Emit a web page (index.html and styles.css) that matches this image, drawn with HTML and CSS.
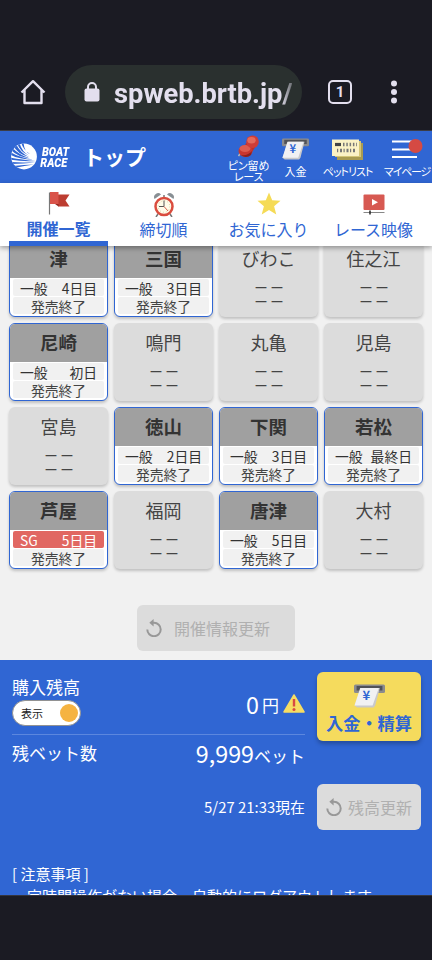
FILE: index.html
```html
<!DOCTYPE html>
<html lang="ja">
<head>
<meta charset="utf-8">
<meta name="viewport" content="width=device-width, initial-scale=1">
<title>トップ</title>
<link rel="stylesheet" href="styles.css">
</head>
<body>
<svg width="0" height="0" class="defs">
  <defs>
    <symbol id="cash" viewBox="0 0 30 24">
      <rect x="0" y="0.5" width="30" height="8.500" rx="1.5" fill="#8b8b8e"/>
      <rect x="2.5" y="2" width="25" height="4.500" fill="#505258"/>
      <path d="M7 4H25L20.5 21.500L19 23.500H3L0.500 21.500Z" fill="#c9c9cb"/>
      <path d="M6 4H24L18 21.500H0.500Z" fill="#f1f1f3"/>
      <text x="12" y="16.500" text-anchor="middle" font-family="Noto Sans CJK JP, sans-serif" font-size="12.5" font-weight="700" fill="#3066d3">¥</text>
    </symbol>
    <symbol id="reload" viewBox="0 0 16 18">
      <path d="M1.300 10.500A6.700 6.700 0 1 0 8 3.800H6.500" fill="none" stroke="#989898" stroke-width="2"/>
      <path d="M7.600 0V7.600L3.300 3.800Z" fill="#989898"/>
    </symbol>
  </defs>
</svg>
<div class="browser">
  <svg class="home" width="26" height="26" viewBox="0 0 26 26"><path d="M1.500 13.500L13 2.200L24.500 13.500M4.500 11V24H21.500V11" fill="none" stroke="#e3dfee" stroke-width="2.400" stroke-linejoin="round"/></svg>
  <div class="address">
    <svg width="16" height="20" viewBox="0 0 16 20"><path d="M4 8V5a4 4 0 0 1 8 0V8" fill="none" stroke="#e3dfee" stroke-width="2"/><rect x="0.500" y="6.500" width="15" height="13" rx="2" fill="#e3dfee"/></svg>
    <span class="url">spweb.brtb.jp/</span>
  </div>
  <span class="count">1</span>
  <svg class="dots" width="8" height="24" viewBox="0 0 8 24"><g fill="#e3dfee"><circle cx="4" cy="3.500" r="3"/><circle cx="4" cy="12" r="3"/><circle cx="4" cy="20.500" r="3"/></g></svg>
</div>
<header class="bar">
  <svg class="logo" width="26" height="27" viewBox="0 0 26 27">
    <defs><clipPath id="ball"><circle cx="13" cy="13.500" r="12.900"/></clipPath></defs>
    <g clip-path="url(#ball)">
      <rect width="26" height="27" fill="#fff"/>
      <g fill="#3066d3">
        <path d="M10 -1Q12 7 19 11Q13 9 12.500 -1Z"/>
        <path d="M6 0Q9 9 18 12.500Q11 9 8.500 0Z"/>
        <path d="M2 2Q6 11 18 14Q9 9.500 5 1Z"/>
        <path d="M-1 6Q6 14 19 15.500Q8 12 0.500 4Z"/>
        <path d="M-1 11.500Q7 16.500 22 16.700Q8 14.500 -1 9Z"/>
        <path d="M-1 16.500Q10 18.700 25 18Q10 16.700 -1 14.500Z"/>
        <path d="M0 21Q12 20.500 24.500 19.500Q11 19.500 0 19Z"/>
        <path d="M3 25Q14 22.500 23 21.500Q13 21.500 2 23Z"/>
      </g>
    </g>
  </svg>
  <div class="brand"><span>BOAT</span><span>RACE</span></div>
  <h1>トップ</h1>
  <nav class="tools">
    <a class="tool pin">
      <svg width="22" height="23" viewBox="0 0 22 23"><path d="M3 17L0.500 21" stroke="#bbb" stroke-width="1.500"/><path d="M7 9L13 6L18 11L14 17Z" fill="#bd302c"/><ellipse cx="7.500" cy="16" rx="7" ry="6" fill="#c93630"/><ellipse cx="7" cy="13.500" rx="5.500" ry="3.500" fill="#dd5c50"/><path d="M3 20Q8 24 13 20L14 16Q10 21 3 20Z" fill="#8d211f"/><circle cx="14.500" cy="6.800" r="6.300" fill="#cf3d37"/><ellipse cx="13.500" cy="5.300" rx="4.200" ry="3.200" fill="#e46a5c"/></svg>
      <span>ピン留め</span><span class="second">レース</span>
    </a>
    <a class="tool deposit"><svg width="27" height="22" viewBox="0 0 30 24" preserveAspectRatio="none"><use href="#cash"/></svg><span>入金</span></a>
    <a class="tool bets">
      <svg width="31" height="21" viewBox="0 0 31 21"><path d="M5 4H31V21H5Z" fill="#a89b51"/><path d="M3 2H29V18H3Z" fill="#d4c678"/><path d="M0 0.500H27V17H0Z" fill="#fbf2c5"/><path d="M3 5.500H9" stroke="#444" stroke-width="3.200"/><path d="M11 5.500H25" stroke="#777" stroke-width="3.500" stroke-dasharray="1.500 1.800"/><path d="M5 11.500H24" stroke="#777" stroke-width="3.500" stroke-dasharray="1.200 1.800 2 1.500"/></svg>
      <span>ペットリスト</span>
    </a>
    <a class="tool mypage">
      <svg width="32" height="21" viewBox="0 0 32 21"><path d="M1 2.500H27M1 10.500H27M1 18H26" stroke="#fff" stroke-width="1.900"/><circle cx="24.500" cy="7" r="7" fill="#d54a43"/></svg>
      <span>マイページ</span>
    </a>
  </nav>
</header>
<nav class="tabs">
  <a class="tab active"><svg width="22" height="24" viewBox="0 0 22 24"><path d="M1.500 2V24" stroke="#777" stroke-width="1.200"/><path d="M10 4H21.500L17.500 10L21.500 16H10Z" fill="#bd3d31"/><path d="M2 1.500H10.500V13.500H2Z" fill="#d9534a"/><path d="M7 13.500H10.500V16Z" fill="#8d2922"/></svg><span>開催一覧</span></a>
  <a class="tab"><svg width="22" height="25" viewBox="0 -1 22 25"><path d="M1.500 6A4 4 0 0 1 8 1.500ZM20.500 6A4 4 0 0 0 14 1.500Z" fill="#888f94"/><path d="M5 21L3 24M17 21L19 24M11 2V5" stroke="#777" stroke-width="1.500"/><circle cx="11" cy="13.500" r="8.500" fill="#fffbea" stroke="#da4c3e" stroke-width="2.500"/><circle cx="11" cy="13.500" r="5.800" fill="none" stroke="#e1cf9d" stroke-width="1" stroke-dasharray="1 2"/><path d="M11 7.500V13.500H6" fill="none" stroke="#555" stroke-width="1"/><path d="M11 13.500L15 18" stroke="#d9604d"/></svg><span>締切順</span></a>
  <a class="tab"><svg width="24" height="25" viewBox="0 0 24 25"><path d="M12 0.500L15.200 8.300L23.500 8.800L17.100 14.200L19.300 22.500L12 17.900L4.700 22.500L6.900 14.200L0.500 8.800L8.800 8.300Z" fill="#f5db56"/></svg><span>お気に入り</span></a>
  <a class="tab"><svg width="22" height="21" viewBox="0 0 22 21"><rect x="0.500" y="0.500" width="21" height="15.500" rx="1" fill="#d75952"/><path d="M9 5L15 8.200L9 11.500Z" fill="#fff"/><path d="M0.500 18.500H21.500" stroke="#888"/><path d="M7 16.500V20.500" stroke="#222" stroke-width="1.500"/></svg><span>レース映像</span></a>
</nav>
<main>
  <section class="grid">
    <article class="card open"><h2>津</h2><p class="day"><span>一般</span><span>4日目</span></p><p class="state">発売終了</p></article>
    <article class="card open"><h2>三国</h2><p class="day"><span>一般</span><span>3日目</span></p><p class="state">発売終了</p></article>
    <article class="card"><h2>びわこ</h2><p class="none">－－</p><p class="none">－－</p></article>
    <article class="card"><h2>住之江</h2><p class="none">－－</p><p class="none">－－</p></article>
    <article class="card open"><h2>尼崎</h2><p class="day"><span>一般</span><span>初日</span></p><p class="state">発売終了</p></article>
    <article class="card"><h2>鳴門</h2><p class="none">－－</p><p class="none">－－</p></article>
    <article class="card"><h2>丸亀</h2><p class="none">－－</p><p class="none">－－</p></article>
    <article class="card"><h2>児島</h2><p class="none">－－</p><p class="none">－－</p></article>
    <article class="card"><h2>宮島</h2><p class="none">－－</p><p class="none">－－</p></article>
    <article class="card open"><h2>徳山</h2><p class="day"><span>一般</span><span>2日目</span></p><p class="state">発売終了</p></article>
    <article class="card open"><h2>下関</h2><p class="day"><span>一般</span><span>3日目</span></p><p class="state">発売終了</p></article>
    <article class="card open"><h2>若松</h2><p class="day"><span>一般</span><span>最終日</span></p><p class="state">発売終了</p></article>
    <article class="card open"><h2>芦屋</h2><p class="day sg"><span>SG</span><span>5日目</span></p><p class="state">発売終了</p></article>
    <article class="card"><h2>福岡</h2><p class="none">－－</p><p class="none">－－</p></article>
    <article class="card open"><h2>唐津</h2><p class="day"><span>一般</span><span>5日目</span></p><p class="state">発売終了</p></article>
    <article class="card"><h2>大村</h2><p class="none">－－</p><p class="none">－－</p></article>
  </section>
  <button class="refresh"><svg width="16" height="18"><use href="#reload"/></svg><span>開催情報更新</span></button>
</main>
<footer>
  <div class="account">
    <div class="figures">
      <div class="balance">
        <div><div class="label">購入残高</div><div class="toggle"><span>表示</span><i></i></div></div>
        <div class="amount"><span class="num">0</span><span class="yen">円</span><svg width="22" height="19" viewBox="0 0 22 19"><path d="M11 1L21 18H1Z" fill="#f6dd63" stroke="#f6dd63" stroke-width="1.500" stroke-linejoin="round"/><path d="M11 5V12.500" stroke="#d94a42" stroke-width="2.400"/><circle cx="11" cy="15.500" r="1.500" fill="#d94a42"/></svg></div>
      </div>
      <div class="remaining"><span class="label">残ベット数</span><span><span class="num">9,999</span><span class="unit">ベット</span></span></div>
      <div class="asof">5/27 21:33現在</div>
    </div>
    <div class="actions">
      <button class="pay"><svg width="31" height="24" viewBox="0 0 30 24" preserveAspectRatio="none"><use href="#cash"/></svg><span>入金・精算</span></button>
      <button class="refresh small"><svg width="16" height="18"><use href="#reload"/></svg><span>残高更新</span></button>
    </div>
  </div>
  <div class="notes"><p>[ 注意事項 ]</p><p>一定時間操作がない場合、自動的にログアウトします。</p></div>
</footer>
</body>
</html>
```
FILE: styles.css
```css
* { box-sizing: border-box; margin: 0; padding: 0; }
html, body { height: 960px; overflow: hidden; }
body { width: 432px; background: #1b1b23; font-family: "Noto Sans CJK JP", sans-serif; display: flex; flex-direction: column; }
svg { display: block; flex: none; }
.defs { position: absolute; }
button { border: 0; font: inherit; }

.browser { height: 131px; flex: none; padding: 54px 0 0 20px; display: flex; align-items: center; border-bottom: 1px solid #3b3c46; }
.address { width: 237px; height: 54px; margin-left: 19px; border-radius: 27px; background: #2a302f; display: flex; align-items: center; padding: 0 10px 0 19px; }
.address svg { margin-top: -1px; }
.url { margin-left: 14px; flex: 1; overflow: hidden; white-space: nowrap; color: #e3dfee; font: 700 27.300px/40px Roboto, sans-serif; padding-top: 3px; -webkit-mask-image: linear-gradient(90deg, #000 94%, rgba(0,0,0,.35)); mask-image: linear-gradient(90deg, #000 94%, rgba(0,0,0,.35)); }
.count { width: 24px; height: 24px; margin-left: 26px; border: 2.500px solid #e3dfee; border-radius: 5px; color: #e3dfee; font: 700 15px/20px Roboto, sans-serif; text-align: center; }
.dots { margin-left: 38px; }

.bar { height: 52px; flex: none; background: #3066d3; color: #fff; display: flex; padding-left: 11px; }
.logo { margin-top: 12px; }
.brand { width: 31px; margin: 15px 0 0 5px; display: flex; flex-direction: column; font: italic 900 12.800px/11px Roboto, sans-serif; transform: scaleX(.85); transform-origin: 0 0; }
.brand span + span { margin-left: -2px; }
.bar h1 { margin: 10px 0 0 10px; font-size: 21px; line-height: 30px; font-weight: 700; white-space: nowrap; width: 62px; }
.tools { flex: 1; display: flex; margin-left: 77px; }
.tool { display: flex; flex-direction: column; align-items: center; font-size: 11px; line-height: 12px; white-space: nowrap; font-feature-settings: "palt"; }
.pin { width: 53px; padding-top: 4px; }
.pin span { margin-top: 1px; letter-spacing: -.2px; }
.pin .second { margin-top: -1px; }
.deposit { width: 41px; padding-top: 7px; }
.bets { width: 63px; padding-top: 8px; letter-spacing: -1px; }
.mypage { width: 56px; padding-top: 8px; letter-spacing: -1.200px; }
.deposit span, .bets span, .mypage span { margin-top: 5px; }

.tabs { height: 63px; flex: none; background: #fff; color: #3066d3; display: flex; padding: 0 6px; position: relative; z-index: 1; box-shadow: 0 2px 5px rgba(0,0,0,.35); }
.tab { width: 105px; margin-top: 9px; display: flex; flex-direction: column; align-items: center; }
.tab svg { height: 25px; }
.tab span { font-size: 16px; line-height: 24px; white-space: nowrap; }
.tab.active { width: 99px; margin: 7px 3px 0; border-bottom: 5px solid #3066d3; font-weight: 700; }
.tab.active span { padding-top: 1px; }

main { height: 414px; flex: none; background: #f1f1f1; padding: 0 9px; overflow: hidden; }
.grid { margin-top: -7.500px; display: grid; grid-template-columns: repeat(4, 99px); grid-auto-rows: 78.500px; gap: 5.500px 6px; }
.card { border-radius: 6px; background: #dcdcdc; box-shadow: 0 2px 3px rgba(0,0,0,.2); color: #444; text-align: center; overflow: hidden; }
.card h2 { font-size: 18px; font-weight: 400; line-height: 38px; height: 41px; }
.none { font-size: 15px; line-height: 14.300px; letter-spacing: 1px; padding-left: 2px; font-weight: 500; }
.card.open { border: 1.500px solid #3066d3; background: #fff; color: #333; }
.open h2 { height: 38px; line-height: 37px; font-size: 18.500px; font-weight: 700; background: #a0a0a0; }
.day, .state { height: 17px; margin: 1.300px 3px 0; background: #f1f1f1; border-radius: 2px; font-size: 13.800px; line-height: 18px; }
.state { color: #444; }
.day { display: flex; justify-content: space-between; padding: 0 7px; }
.day.sg { background: #e16762; color: #fff; }
.refresh { width: 158px; height: 46px; margin: 36px 0 0 128px; border-radius: 6px; background: #dcdcdc; color: #b0b0b0; display: flex; align-items: center; padding-left: 9px; font-size: 16px; }
.refresh span { margin-left: 12px; white-space: nowrap; }

footer { height: 236px; flex: none; background: #3066d3; color: #fff; padding: 12px 11px 0 12px; overflow: hidden; border-bottom: 1px solid #34353e; }
.account { display: flex; justify-content: space-between; height: 191px; }
.figures { width: 293px; }
.balance { height: 63px; border-bottom: 1.500px solid #5c87de; display: flex; justify-content: space-between; }
.label { font-size: 17px; line-height: 26px; margin-top: 2px; }
.toggle { width: 69px; height: 26px; border: 1.500px solid #929292; border-radius: 13px; background: #fff; color: #222; font-size: 11px; display: flex; align-items: center; justify-content: space-between; padding: 0 2.500px 0 8px; margin-top: -.5px; }
.toggle i { width: 18px; height: 18px; border-radius: 50%; background: #f5b341; }
.amount { display: flex; align-items: center; padding-top: 1px; }
.num { font-size: 23.300px; }
.yen { font-size: 17px; margin: 2px 4px 0 3px; }
.remaining { display: flex; justify-content: space-between; height: 38px; line-height: 38px; align-items: center; }
.remaining .label { margin-top: -2px; }
.unit { font-size: 17px; }
.asof { margin-top: 22px; text-align: right; font-size: 14.900px; line-height: 24px; }
.actions { width: 104px; }
.pay { width: 104px; height: 69px; border-radius: 6px; background: #f5db5d; color: #3066d3; box-shadow: 0 3px 4px rgba(0,0,0,.25); display: flex; flex-direction: column; align-items: center; justify-content: flex-start; padding-top: 12px; font-size: 17.200px; font-weight: 700; line-height: 29px; white-space: nowrap; }
.refresh.small { width: 104px; margin: 42.500px 0 0; padding-left: 9px; }
.refresh.small span { margin-left: 6px; }
.notes { font-size: 15px; line-height: 22px; white-space: nowrap; }
```
